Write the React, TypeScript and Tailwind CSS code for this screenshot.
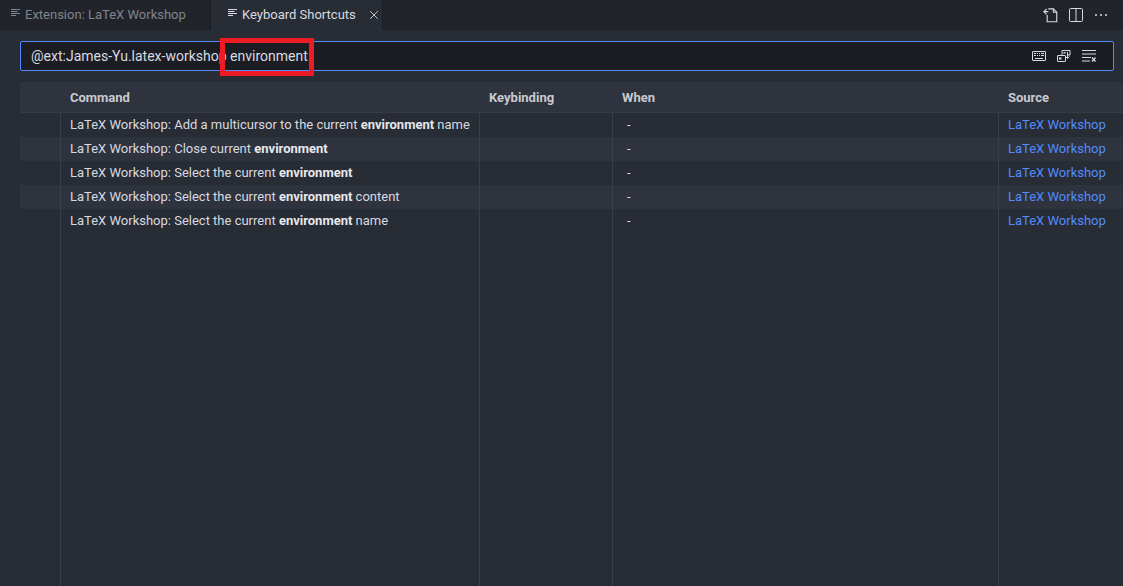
import { X } from "lucide-react"

const rows = [
  { before: "LaTeX Workshop: Add a multicursor to the current ", after: " name" },
  { before: "LaTeX Workshop: Close current ", after: "" },
  { before: "LaTeX Workshop: Select the current ", after: "" },
  { before: "LaTeX Workshop: Select the current ", after: " content" },
  { before: "LaTeX Workshop: Select the current ", after: " name" },
]

function TabIcon() {
  return (
    <svg width="11" height="11" viewBox="0 0 11 11" fill="none" stroke="currentColor" strokeWidth="1" className="mb-[3px] shrink-0">
      <path d="M1 1.500h9M1 3.500h6.500M1 5.500h9M1 7.500h5" />
    </svg>
  )
}

export default function App() {
  const grid = "grid grid-cols-[40px_419px_133px_386px_1fr]"
  return (
    <div className="flex h-[586px] w-[1123px] flex-col overflow-hidden bg-[#282c34] font-['Roboto',sans-serif] text-[13px] text-[#d7dae0]">
      <div className="flex h-[30px] items-stretch bg-[#21252b]">
        <div className="flex w-[211px] items-center gap-[4px] border-r border-[#1b1e23] pl-[10px] text-[#7f848e]">
          <TabIcon />
          <span>Extension: LaTeX Workshop</span>
        </div>
        <div className="flex w-[172px] items-center gap-[4px] border-r border-[#1b1e23] bg-[#282c34] pl-[16px] text-[#d7dae0]">
          <TabIcon />
          <span className="whitespace-nowrap">Keyboard Shortcuts</span>
          <X size={14} strokeWidth={1.5} className="ml-[7px] shrink-0" />
        </div>
        <div className="ml-auto flex items-center gap-[9px] pr-[14px] text-[#d7dae0]">
          <svg width="18" height="18" viewBox="0 0 16 16" fill="none" stroke="currentColor" strokeWidth="1">
            <path d="M6.500 2.500h4.500l3 3v8.500H5.500V8" />
            <path d="M11 2.500v3h3" />
            <path d="M5 7.500 2.500 5 5 2.500M2.500 5h4" />
          </svg>
          <svg width="16" height="16" viewBox="0 0 16 16" fill="none" stroke="currentColor" strokeWidth="1">
            <rect x="1.500" y="1.500" width="13" height="13" rx="1" />
            <path d="M8 1.500v13" />
          </svg>
          <svg width="16" height="16" viewBox="0 0 16 16" fill="currentColor">
            <circle cx="3" cy="8" r="1" />
            <circle cx="8" cy="8" r="1" />
            <circle cx="13" cy="8" r="1" />
          </svg>
        </div>
      </div>

      <div className="relative ml-[20px] mr-[9px] mt-[11px] flex h-[30px] items-center justify-between rounded-[2px] border border-[#528bff] bg-[#1b1d23] pl-[10px] pr-[16px]">
        <span className="text-[14px] text-[#d7dae0]">@ext:James-Yu.latex-workshop environment</span>
        <div className="flex items-center gap-[9px] text-[#d7dae0]">
          <svg width="16" height="16" viewBox="0 0 16 16" fill="none" stroke="currentColor" strokeWidth="1">
            <rect x="1.500" y="3.500" width="13" height="9" rx="0.500" />
            <path d="M3 5.500h2M6 5.500h1M8 5.500h1M10 5.500h3M3 7.500h2M6 7.500h1M8 7.500h1M10 7.500h3M4 10.500h8" />
          </svg>
          <svg width="16" height="16" viewBox="0 0 16 16" fill="none" stroke="currentColor" strokeWidth="1">
            <rect x="1.500" y="7.500" width="8" height="6" rx="0.500" />
            <path d="M6 7V2.500h8V7h-2" />
            <path d="M11.500 4v6M9.500 8.500 11.500 10.500 13.500 8.500" />
            <rect x="3" y="9.500" width="2.500" height="2" fill="currentColor" stroke="none" />
            <rect x="7.500" y="4" width="2" height="1.500" fill="currentColor" stroke="none" />
          </svg>
          <svg width="16" height="16" viewBox="0 0 16 16" fill="none" stroke="currentColor" strokeWidth="1">
            <path d="M1 2.500h14M1 6h14M1 9.500h9M1 13h8" />
            <path d="M11 9.500l3.500 4M14.500 9.500 11 13.500" strokeWidth="1.300" />
          </svg>
        </div>
        <div className="absolute left-[199px] top-[-4px] h-[38px] w-[94px] border-[5px] border-[#ed1c24]" />
      </div>

      <div className="ml-[20px] mt-[11px] flex flex-1 flex-col">
        <div className={`${grid} h-[31px] items-center border-b border-[#363a44] bg-[#2f333d] pt-[1px] font-bold text-[#c8cacf]`}>
          <div />
          <div className="pl-[10px]">Command</div>
          <div className="pl-[10px]">Keybinding</div>
          <div className="pl-[10px]">When</div>
          <div className="pl-[10px]">Source</div>
        </div>
        {rows.map((row, i) => (
          <div key={i} className={`${grid} h-[24px] ${i % 2 === 1 ? "bg-[#2f333d]" : ""}`}>
            <div />
            <div className="flex items-center whitespace-pre border-l border-[#3a3e48] pl-[9px]">
              {row.before}
              <b className="font-bold text-[#e6e8ec]">environment</b>
              {row.after}
            </div>
            <div className="border-l border-[#3a3e48]" />
            <div className="flex items-center border-l border-[#3a3e48] pl-[14px]">-</div>
            <div className="flex items-center border-l border-[#3a3e48] pl-[9px] text-[#528bff]">LaTeX Workshop</div>
          </div>
        ))}
        <div className={`${grid} flex-1`}>
          <div />
          <div className="border-l border-[#3a3e48]" />
          <div className="border-l border-[#3a3e48]" />
          <div className="border-l border-[#3a3e48]" />
          <div className="border-l border-[#3a3e48]" />
        </div>
      </div>
    </div>
  )
}
